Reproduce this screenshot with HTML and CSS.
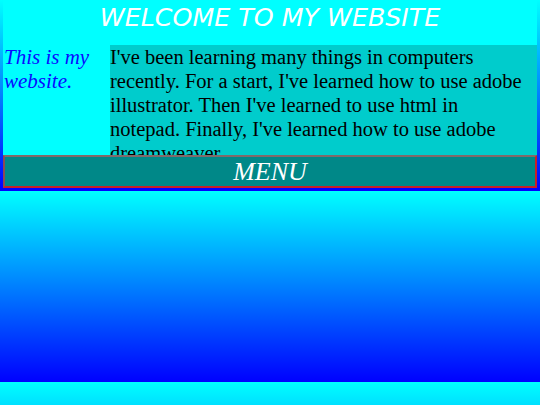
FILE: index.html
```html
<!DOCTYPE html>
<html>
<head>
<meta charset="utf-8">
<link rel="stylesheet" href="styles.css">
</head>
<body>
<div class="wrapper">
  <div class="header">WELCOME TO MY WEBSITE</div>
  <div class="row">
    <div class="side">This is my website.</div>
    <div class="content">I've been learning many things in computers recently. For a start, I've learned how to use adobe illustrator. Then I've learned to use html in notepad. Finally, I've learned how to use adobe dreamweaver.</div>
  </div>
  <div class="menu">MENU</div>
</div>
</body>
</html>
```

FILE: styles.css
```css
html {
  margin: 0;
}
body {
  margin: 0;
  padding-bottom: 3px;
  background: linear-gradient(#00ffff, #0000ff);
}
.wrapper {
  width: 534px;
  margin: 0 auto;
  background: #00ffff;
}
.header {
  height: 45px;
  line-height: 36px;
  text-align: center;
  color: #ffffff;
  font-family: "DejaVu Sans", sans-serif;
  font-style: italic;
  font-size: 25.3px;
}
.row {
  display: flex;
  height: 110px;
}
.side {
  width: 107px;
  padding-left: 1px;
  box-sizing: border-box;
  font-family: "Liberation Serif", serif;
  font-style: italic;
  font-size: 21px;
  line-height: 24px;
  color: #0a0aff;
}
.content {
  flex: 1;
  background: #00cccc;
  overflow: hidden;
  padding-right: 6px;
  font-family: "Liberation Serif", serif;
  font-size: 20.5px;
  line-height: 24px;
  color: #000000;
}
.menu {
  height: 29px;
  line-height: 29px;
  background: #008888;
  border-style: solid;
  border-width: 2px;
  border-color: #806a6a #c82028 #c82028 #8a4a55;
  text-align: center;
  color: #ffffff;
  font-family: "Liberation Serif", serif;
  font-style: italic;
  font-size: 26px;
}
```
